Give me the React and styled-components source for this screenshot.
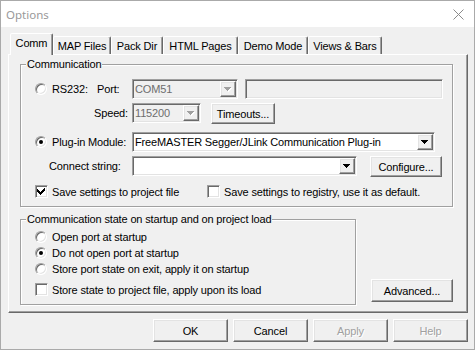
import React from "react";
import styled, { createGlobalStyle, css } from "styled-components";

const Global = createGlobalStyle`
  html, body { margin: 0; padding: 0; background: #fff; }
  body { font-family: "Liberation Sans", Arial, sans-serif; font-size: 11px; color: #000; }
  * { box-sizing: border-box; }
`;

const raised = css`
  border: 1px solid;
  border-color: #fff #696969 #696969 #fff;
  box-shadow: inset -1px -1px 0 #a0a0a0, inset 1px 1px 0 #e3e3e3;
`;

const sunken = css`
  border: 1px solid;
  border-color: #a0a0a0 #fff #fff #a0a0a0;
  box-shadow: inset 1px 1px 0 #696969, inset -1px -1px 0 #e3e3e3;
`;

const Window = styled.div`
  width: 475px;
  height: 350px;
  border: 1px solid #aaaaaa;
  display: flex;
  flex-direction: column;
  background: #f0f0f0;
  overflow: hidden;
`;

const TitleBar = styled.div`
  height: 26px;
  flex: none;
  background: #fff;
  display: flex;
  align-items: center;
  justify-content: space-between;
  padding: 0 10px 0 5px;
`;

const Title = styled.span`
  font-family: "Noto Sans", "Liberation Sans", sans-serif;
  font-size: 11.5px;
  color: #999;
`;

const Body = styled.div`
  flex: 1;
  padding: 6px 0 0 7px;
  display: flex;
  flex-direction: column;
`;

const TabStrip = styled.div`
  display: flex;
  align-items: flex-end;
  height: 21px;
  padding-left: 4px;
  flex: none;
`;

const Tab = styled.div`
  flex: none;
  width: ${(p) => p.$w}px;
  height: ${(p) => (p.$active ? 22 : 18)}px;
  display: flex;
  align-items: center;
  justify-content: center;
  background: #f0f0f0;
  border: 1px solid;
  border-bottom: none;
  border-color: #fff #696969 transparent #fff;
  box-shadow: inset -1px 0 0 #a0a0a0;
  border-radius: 2px 2px 0 0;
  white-space: nowrap;
  letter-spacing: -0.15px;
  ${(p) =>
    p.$active &&
    css`
      margin-left: -2px;
      margin-bottom: -1px;
      position: relative;
      z-index: 1;
      padding-bottom: 3px;
    `}
`;

const Panel = styled.div`
  width: 460px;
  height: 259px;
  flex: none;
  border: 1px solid;
  border-color: #fff #696969 #696969 #fff;
  box-shadow: inset -1px -1px 0 #a0a0a0;
  padding: 9px 0 0 11px;
  display: flex;
  flex-direction: column;
`;

const Group = styled.div`
  position: relative;
  flex: none;
  width: ${(p) => p.$w}px;
  height: ${(p) => p.$h}px;
  border: 1px solid #a0a0a0;
  box-shadow: inset 1px 1px 0 #fff, 1px 1px 0 #fff;
  display: flex;
  flex-direction: column;
`;

const Legend = styled.span`
  position: absolute;
  top: -7px;
  left: 5px;
  padding: 0 1px;
  line-height: 13px;
  background: #f0f0f0;
  white-space: nowrap;
  letter-spacing: -0.15px;
`;

const Row = styled.div`
  display: flex;
  flex: none;
  align-items: ${(p) => p.$align || "center"};
  height: ${(p) => p.$h}px;
  margin-top: ${(p) => p.$mt}px;
  padding-left: 14px;
  white-space: nowrap;
  letter-spacing: -0.15px;
`;

const Cell = styled.div`
  display: flex;
  align-items: center;
  flex: none;
  width: ${(p) => p.$w}px;
  height: ${(p) => (p.$h ? `${p.$h}px` : "auto")};
  justify-content: ${(p) => (p.$right ? "flex-end" : "flex-start")};
  padding-left: ${(p) => p.$pl || 0}px;
  padding-right: ${(p) => p.$pr || 0}px;
`;

const RadioDot = styled.span`
  width: 12px;
  height: 12px;
  flex: none;
  position: relative;
  border-radius: 50%;
  background: #fff;
  border: 1px solid;
  border-color: #a0a0a0 #fff #fff #a0a0a0;
  box-shadow: inset 1px 1px 0 #696969, inset -1px -1px 0 #e3e3e3;
  margin-right: 5px;
  ${(p) =>
    p.$checked &&
    css`
      &::after {
        content: "";
        position: absolute;
        left: 3px;
        top: 3px;
        width: 4px;
        height: 4px;
        border-radius: 50%;
        background: #000;
      }
    `}
`;

const CheckBox = styled.span`
  width: 13px;
  height: 13px;
  flex: none;
  background: #fff;
  ${sunken};
  margin-right: 4px;
  display: flex;
  align-items: center;
  justify-content: center;
`;

const Combo = styled.div`
  width: ${(p) => p.$w}px;
  height: 20px;
  flex: none;
  ${sunken};
  background: ${(p) => (p.$disabled ? "#f0f0f0" : "#fff")};
  color: ${(p) => (p.$disabled ? "#6d6d6d" : "#000")};
  display: flex;
  align-items: center;
  padding: 1px 1px 1px 2px;
`;

const ComboText = styled.span`
  flex: 1;
  overflow: hidden;
  white-space: nowrap;
`;

const DropBtn = styled.span`
  width: 16px;
  height: 16px;
  flex: none;
  background: #f0f0f0;
  ${raised};
  display: flex;
  align-items: center;
  justify-content: center;
`;

const Edit = styled.div`
  width: ${(p) => p.$w}px;
  height: 20px;
  flex: none;
  margin-left: ${(p) => p.$ml || 0}px;
  ${sunken};
  background: #f0f0f0;
`;

const Button = styled.button`
  width: ${(p) => p.$w}px;
  height: ${(p) => p.$h || 23}px;
  flex: none;
  margin: 0 0 0 ${(p) => p.$ml || 0}px;
  padding: 0;
  font: inherit;
  letter-spacing: -0.15px;
  background: #f0f0f0;
  ${raised};
  display: flex;
  align-items: center;
  justify-content: center;
  color: ${(p) => (p.$disabled ? "#a0a0a0" : "#000")};
  ${(p) => p.$disabled && "text-shadow: 1px 1px 0 #fff;"}
`;

const Lower = styled.div`
  display: flex;
  justify-content: space-between;
  align-items: flex-end;
  width: 433px;
  margin-top: 12px;
`;

const AdvancedWrap = styled.div`
  margin-bottom: 3px;
`;

const Footer = styled.div`
  display: flex;
  justify-content: flex-end;
  gap: 5px;
  width: 460px;
  margin-top: 6px;
`;

const Arrow = ({ disabled }) => (
  <svg width="8" height="5" viewBox="0 0 8 5" shapeRendering="crispEdges">
    {disabled && (
      <path transform="translate(1 1)" d="M0 0h7v1h-1v1h-1v1h-1v1h-1v-1h-1v-1h-1v-1h-1z" fill="#fff" />
    )}
    <path d="M0 0h7v1h-1v1h-1v1h-1v1h-1v-1h-1v-1h-1v-1h-1z" fill={disabled ? "#a0a0a0" : "#000"} />
  </svg>
);

const Check = () => (
  <svg width="9" height="9" viewBox="0 0 9 9" shapeRendering="crispEdges">
    <path d="M7 1h1v3h-1v1h-1v1h-1v1h-1v1h-1v-1h-1v-1h-1v-1h-1v-3h1v1h1v1h1v1h1v-1h1v-1h1v-1h1z" fill="#000" transform="translate(-0.5 0)" />
  </svg>
);

const ComboBox = ({ w, disabled, children }) => (
  <Combo $w={w} $disabled={disabled}>
    <ComboText>{children}</ComboText>
    <DropBtn>
      <Arrow disabled={disabled} />
    </DropBtn>
  </Combo>
);

const Radio = ({ checked, children }) => (
  <>
    <RadioDot $checked={checked} />
    <span>{children}</span>
  </>
);

const Checkbox = ({ checked, children }) => (
  <>
    <CheckBox>{checked && <Check />}</CheckBox>
    <span>{children}</span>
  </>
);

const tabs = [
  { label: "Comm", w: 43, active: true },
  { label: "MAP Files", w: 58 },
  { label: "Pack Dir", w: 52 },
  { label: "HTML Pages", w: 75 },
  { label: "Demo Mode", w: 70 },
  { label: "Views & Bars", w: 74 },
];

export default function App() {
  return (
    <>
      <Global />
      <Window>
        <TitleBar>
          <Title>Options</Title>
          <svg width="11" height="11" viewBox="0 0 11 11">
            <path d="M0.5 0.5L10.5 10.5M10.5 0.5L0.5 10.5" stroke="#8a8a8a" strokeWidth="1" />
          </svg>
        </TitleBar>
        <Body>
          <TabStrip>
            {tabs.map((t) => (
              <Tab key={t.label} $w={t.w} $active={t.active}>
                {t.label}
              </Tab>
            ))}
          </TabStrip>
          <Panel>
            <Group $w={433} $h={143}>
              <Legend>Communication</Legend>
              <Row $mt={14} $h={20}>
                <Cell $w={62}>
                  <Radio>RS232:</Radio>
                </Cell>
                <Cell $w={35}>Port:</Cell>
                <ComboBox w={106} disabled>
                  COM51
                </ComboBox>
                <Edit $w={198} $ml={7} />
              </Row>
              <Row $mt={4} $h={21} $align="flex-start">
                <Cell $w={97} $h={20} $right $pr={4}>
                  Speed:
                </Cell>
                <ComboBox w={69} disabled>
                  115200
                </ComboBox>
                <Button $w={64} $h={21} $ml={10}>
                  Timeouts...
                </Button>
              </Row>
              <Row $mt={8} $h={20}>
                <Cell $w={97}>
                  <Radio checked>Plug-in Module:</Radio>
                </Cell>
                <ComboBox w={303}>FreeMASTER Segger/JLink Communication Plug-in</ComboBox>
              </Row>
              <Row $mt={4} $h={21} $align="flex-start">
                <Cell $w={97} $h={20} $pl={14}>
                  Connect string:
                </Cell>
                <ComboBox w={225} />
                <Button $w={72} $h={21} $ml={13}>
                  Configure...
                </Button>
              </Row>
              <Row $mt={8} $h={13}>
                <Cell $w={172}>
                  <Checkbox checked>Save settings to project file</Checkbox>
                </Cell>
                <Checkbox>Save settings to registry, use it as default.</Checkbox>
              </Row>
            </Group>
            <Lower>
              <Group $w={336} $h={86}>
                <Legend>Communication state on startup and on project load</Legend>
                <Row $mt={9} $h={16}>
                  <Radio>Open port at startup</Radio>
                </Row>
                <Row $mt={0} $h={16}>
                  <Radio checked>Do not open port at startup</Radio>
                </Row>
                <Row $mt={0} $h={16}>
                  <Radio>Store port state on exit, apply it on startup</Radio>
                </Row>
                <Row $mt={6} $h={13}>
                  <Checkbox>Store state to project file, apply upon its load</Checkbox>
                </Row>
              </Group>
              <AdvancedWrap>
                <Button $w={82}>Advanced...</Button>
              </AdvancedWrap>
            </Lower>
          </Panel>
          <Footer>
            <Button $w={75}>OK</Button>
            <Button $w={75}>Cancel</Button>
            <Button $w={75} $disabled>
              Apply
            </Button>
            <Button $w={75} $disabled>
              Help
            </Button>
          </Footer>
        </Body>
      </Window>
    </>
  );
}
